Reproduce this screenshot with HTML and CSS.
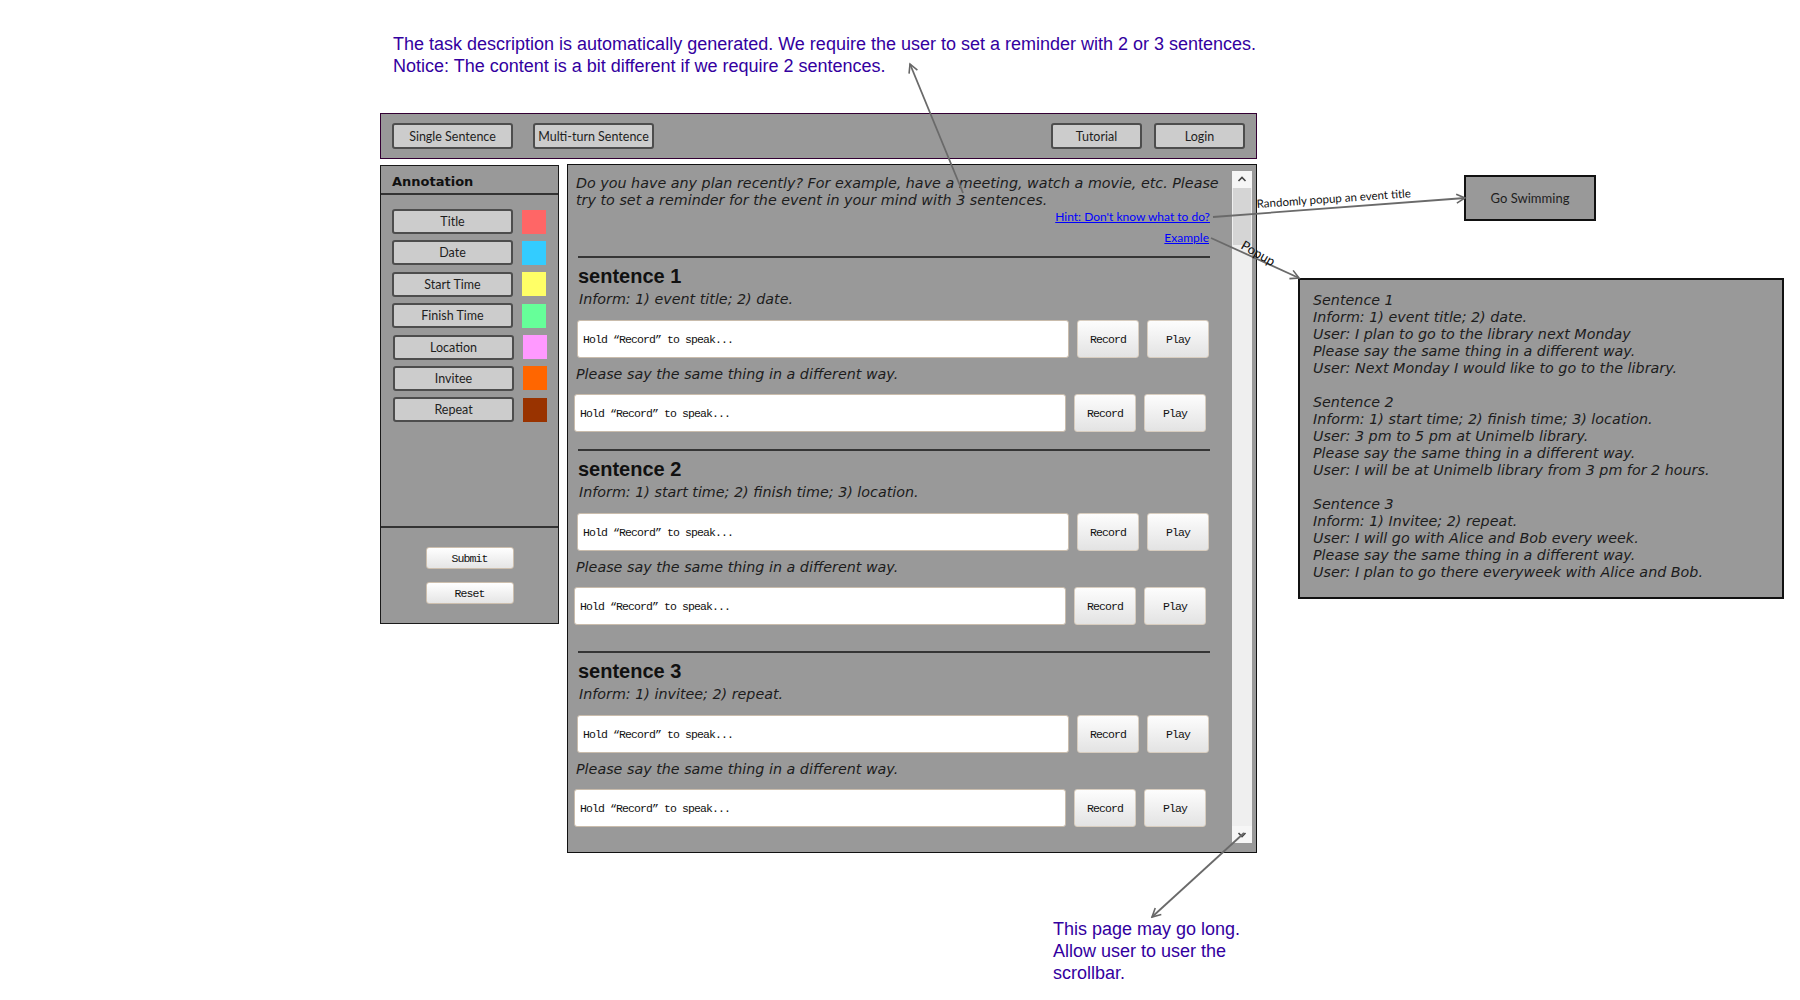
FILE: index.html
```html
<!DOCTYPE html>
<html lang="en">
<head>
<meta charset="utf-8">
<title>Reminder annotation mockup</title>
<link rel="stylesheet" href="styles.css">
</head>
<body>
<div class="canvas">
  <p class="note note--top">The task description is automatically generated. We require the user to set a reminder with 2 or 3 sentences.<br>Notice: The content is a bit different if we require 2 sentences.</p>

  <div class="mock">
    <header class="topbar">
      <div class="topbar-group">
        <button class="sketch-btn">Single Sentence</button>
        <button class="sketch-btn">Multi-turn Sentence</button>
      </div>
      <div class="topbar-group topbar-group--right">
        <button class="sketch-btn sketch-btn--small">Tutorial</button>
        <button class="sketch-btn sketch-btn--small">Login</button>
      </div>
    </header>

    <div class="workspace">
      <aside class="side">
        <div class="side-head">Annotation</div>
        <div class="side-body">
          <div class="tag-row"><button class="sketch-btn tag-btn">Title</button><span class="swatch swatch--title"></span></div>
          <div class="tag-row"><button class="sketch-btn tag-btn">Date</button><span class="swatch swatch--date"></span></div>
          <div class="tag-row"><button class="sketch-btn tag-btn">Start Time</button><span class="swatch swatch--start"></span></div>
          <div class="tag-row"><button class="sketch-btn tag-btn">Finish Time</button><span class="swatch swatch--finish"></span></div>
          <div class="tag-row tag-row--shift"><button class="sketch-btn tag-btn">Location</button><span class="swatch swatch--location"></span></div>
          <div class="tag-row tag-row--shift"><button class="sketch-btn tag-btn">Invitee</button><span class="swatch swatch--invitee"></span></div>
          <div class="tag-row tag-row--shift"><button class="sketch-btn tag-btn">Repeat</button><span class="swatch swatch--repeat"></span></div>
        </div>
        <div class="side-foot">
          <button class="plain-btn">Submit</button>
          <button class="plain-btn">Reset</button>
        </div>
      </aside>

      <main class="main">
        <div class="content">
          <p class="desc">Do you have any plan recently? For example, have a meeting, watch a movie, etc. Please<br>try to set a reminder for the event in your mind with 3 sentences.</p>
          <div class="links">
            <a class="link" href="#">Hint: Don't know what to do?</a>
            <a class="link link--example" href="#">Example</a>
          </div>

          <section class="sentence">
            <hr class="rule">
            <h2 class="sentence-title">sentence 1</h2>
            <p class="inform">Inform: 1) event title; 2) date.</p>
            <div class="record-row">
              <div class="speech">Hold “Record” to speak...</div>
              <button class="rec-btn">Record</button>
              <button class="rec-btn">Play</button>
            </div>
            <p class="please">Please say the same thing in a different way.</p>
            <div class="record-row record-row--alt">
              <div class="speech">Hold “Record” to speak...</div>
              <button class="rec-btn">Record</button>
              <button class="rec-btn">Play</button>
            </div>
          </section>

          <section class="sentence sentence--wide">
            <hr class="rule">
            <h2 class="sentence-title">sentence 2</h2>
            <p class="inform">Inform: 1) start time; 2) finish time; 3) location.</p>
            <div class="record-row">
              <div class="speech">Hold “Record” to speak...</div>
              <button class="rec-btn">Record</button>
              <button class="rec-btn">Play</button>
            </div>
            <p class="please">Please say the same thing in a different way.</p>
            <div class="record-row record-row--alt">
              <div class="speech">Hold “Record” to speak...</div>
              <button class="rec-btn">Record</button>
              <button class="rec-btn">Play</button>
            </div>
          </section>

          <section class="sentence">
            <hr class="rule">
            <h2 class="sentence-title">sentence 3</h2>
            <p class="inform">Inform: 1) invitee; 2) repeat.</p>
            <div class="record-row">
              <div class="speech">Hold “Record” to speak...</div>
              <button class="rec-btn">Record</button>
              <button class="rec-btn">Play</button>
            </div>
            <p class="please">Please say the same thing in a different way.</p>
            <div class="record-row record-row--alt">
              <div class="speech">Hold “Record” to speak...</div>
              <button class="rec-btn">Record</button>
              <button class="rec-btn">Play</button>
            </div>
          </section>
        </div>

        <div class="scrollbar">
          <div class="scroll-arrow">
            <svg width="20" height="17" viewBox="0 0 20 17"><polyline points="6.5,10 10,6.5 13.5,10" fill="none" stroke="#444" stroke-width="1.6"/></svg>
          </div>
          <div class="scroll-thumb"></div>
          <div class="scroll-track"></div>
          <div class="scroll-arrow">
            <svg width="20" height="17" viewBox="0 0 20 17"><polyline points="6.5,7 10,10.5 13.5,7" fill="none" stroke="#444" stroke-width="1.6"/></svg>
          </div>
        </div>
      </main>
    </div>
  </div>

  <p class="note note--bottom">This page may go long.<br>Allow user to user the<br>scrollbar.</p>

  <div class="event-box">Go Swimming</div>

  <div class="popup">
    <p class="popup-block">Sentence 1<br>Inform: 1) event title; 2) date.<br>User: I plan to go to the library next Monday<br>Please say the same thing in a different way.<br>User: Next Monday I would like to go to the library.</p>
    <p class="popup-block">Sentence 2<br>Inform: 1) start time; 2) finish time; 3) location.<br>User: 3 pm to 5 pm at Unimelb library.<br>Please say the same thing in a different way.<br>User: I will be at Unimelb library from 3 pm for 2 hours.</p>
    <p class="popup-block">Sentence 3<br>Inform: 1) Invitee; 2) repeat.<br>User: I will go with Alice and Bob every week.<br>Please say the same thing in a different way.<br>User: I plan to go there everyweek with Alice and Bob.</p>
  </div>

  <svg class="arrows" width="1800" height="1000" viewBox="0 0 1800 1000">
    <defs>
      <marker id="head" markerWidth="12" markerHeight="12" refX="10" refY="6" orient="auto" markerUnits="userSpaceOnUse">
        <path d="M1.5,1.5 L10,6 L1.5,10.5" fill="none" stroke="#666" stroke-width="1.6"/>
      </marker>
    </defs>
    <g class="arrow-lines">
      <line x1="963" y1="193" x2="910" y2="64" marker-end="url(#head)"/>
      <line x1="1213" y1="217" x2="1465" y2="198" marker-end="url(#head)"/>
      <line x1="1211" y1="238" x2="1299" y2="278" marker-end="url(#head)"/>
      <line x1="1244" y1="833" x2="1152" y2="917" marker-end="url(#head)"/>
    </g>
    <text class="arrow-label" x="1257" y="208" transform="rotate(-4 1257 208)">Randomly popup an event title</text>
    <text class="arrow-label arrow-label--big" x="1240" y="248" transform="rotate(30 1240 248)">Popup</text>
  </svg>
</div>
</body>
</html>
```

FILE: styles.css
```css
html, body {
  margin: 0;
  padding: 0;
  background: #ffffff;
}

.canvas {
  position: relative;
  width: 1800px;
  height: 1000px;
  overflow: hidden;
  font-family: "Liberation Sans", Arial, sans-serif;
}

/* annotation notes */
.note {
  margin: 0;
  font-family: "Liberation Sans", Arial, sans-serif;
  font-size: 18px;
  line-height: 22px;
  color: #3300a0;
}
.note--top {
  padding: 33px 0 0 393px;
}
.note--bottom {
  margin: 65px 0 0 1053px;
}

/* mock frame */
.mock {
  margin: 36px 0 0 380px;
  width: 877px;
}

.topbar {
  box-sizing: border-box;
  height: 46px;
  border: 1px solid #330033;
  background: #999999;
  display: flex;
  justify-content: space-between;
  padding: 9px 11px 0 11px;
}
.topbar-group {
  display: flex;
  gap: 20px;
}
.topbar-group--right {
  gap: 12px;
}

.sketch-btn {
  box-sizing: border-box;
  width: 121px;
  height: 26px;
  padding: 0;
  background: #cccccc;
  border: 2px solid #4d4d4d;
  border-radius: 3px;
  font-family: Lato, "Open Sans", sans-serif;
  font-size: 12.5px;
  color: #1e1e1e;
}
.sketch-btn--small {
  width: 91px;
}

.workspace {
  display: flex;
  align-items: flex-start;
  gap: 8px;
  margin-top: 5px;
}

/* left annotation panel */
.side {
  box-sizing: border-box;
  width: 179px;
  height: 459px;
  margin-top: 1px;
  border: 1px solid #1a1a1a;
  background: #999999;
  display: flex;
  flex-direction: column;
}
.side-head {
  height: 23px;
  padding: 4px 0 0 11px;
  border-bottom: 2px solid #333333;
  font-family: "DejaVu Sans", Verdana, sans-serif;
  font-weight: bold;
  font-size: 13px;
  line-height: 23px;
  color: #111111;
}
.side-body {
  flex: 1;
  display: flex;
  flex-direction: column;
  gap: 6.4px;
  padding: 14px 0 0 11px;
}
.tag-row {
  display: flex;
  align-items: center;
  gap: 9px;
}
.tag-row--shift {
  margin-left: 1px;
}
.tag-btn {
  height: 25px;
}
.swatch {
  width: 24px;
  height: 24px;
}
.swatch--title { background: #ff6666; }
.swatch--date { background: #33ccff; }
.swatch--start { background: #ffff66; }
.swatch--finish { background: #66ff99; }
.swatch--location { background: #ff99ff; }
.swatch--invitee { background: #ff6600; }
.swatch--repeat { background: #993300; }

.side-foot {
  border-top: 2px solid #333333;
  padding: 19px 0;
  display: flex;
  flex-direction: column;
  align-items: center;
  gap: 13px;
}
.plain-btn {
  box-sizing: border-box;
  width: 88px;
  height: 22px;
  padding: 0;
  background: linear-gradient(#ffffff, #e5e5e5);
  border: 1px solid #cdbfae;
  border-radius: 3px;
  font-family: "Liberation Mono", monospace;
  font-size: 11.5px;
  letter-spacing: -0.9px;
  color: #111111;
}

/* main task panel */
.main {
  box-sizing: border-box;
  width: 690px;
  height: 689px;
  border: 1px solid #111111;
  background: #999999;
  display: flex;
  gap: 22px;
  padding: 6px 4px 9px 8px;
}
.content {
  flex: 0 0 634px;
  min-width: 0;
  padding-top: 4px;
}
.desc,
.inform,
.please,
.popup-block {
  font-family: "DejaVu Sans", Verdana, sans-serif;
  font-style: italic;
  font-size: 14.3px;
  line-height: 17px;
  color: #1c1c1c;
}
.desc {
  margin: 0;
  white-space: nowrap;
}
.links {
  display: flex;
  flex-direction: column;
  align-items: flex-end;
}
.link {
  font-family: Lato, "Open Sans", sans-serif;
  font-size: 12px;
  line-height: 16px;
  color: #0000ff;
  text-decoration: underline;
}
.link--example {
  margin-top: 5px;
  margin-right: 1px;
}

.sentence {
  padding-bottom: 17px;
}
.sentence:first-of-type {
  margin-top: 10px;
}
.sentence--wide {
  padding-bottom: 26px;
}
.rule {
  height: 2px;
  margin: 0 0 0 2px;
  border: none;
  background: #353535;
}
.sentence-title {
  margin: 7px 0 0 2px;
  font-family: "Liberation Sans", Arial, sans-serif;
  font-size: 20px;
  line-height: 22px;
  font-weight: bold;
  color: #111111;
}
.inform {
  margin: 4px 0 0 3px;
}
.please {
  margin: 8px 0 0 0;
}

.record-row {
  display: flex;
  gap: 8px;
  height: 38px;
  margin: 12px 0 0 1px;
}
.record-row--alt {
  margin: 11px 0 0 -2px;
}
.speech {
  box-sizing: border-box;
  flex: 0 0 492px;
  display: flex;
  align-items: center;
  padding-left: 5px;
  background: #ffffff;
  border: 1px solid #c9bcac;
  border-radius: 3px;
  font-family: "Liberation Mono", monospace;
  font-size: 11.5px;
  letter-spacing: -0.9px;
  color: #111111;
}
.rec-btn {
  box-sizing: border-box;
  flex: 0 0 62px;
  padding: 0;
  background: linear-gradient(#fdfdfd, #e3e3e3);
  border: 1px solid #d8cdbf;
  border-radius: 3px;
  font-family: "Liberation Mono", monospace;
  font-size: 11.5px;
  letter-spacing: -0.9px;
  color: #111111;
}

.scrollbar {
  width: 20px;
  background: #efefef;
  display: flex;
  flex-direction: column;
}
.scroll-arrow {
  height: 17px;
  background: #f6f6f6;
}
.scroll-arrow svg {
  display: block;
}
.scroll-thumb {
  height: 57px;
  margin: 0 1px;
  background: #d5d5d5;
}
.scroll-track {
  flex: 1;
}

/* diagram nodes */
.event-box {
  position: absolute;
  left: 1464px;
  top: 175px;
  box-sizing: border-box;
  width: 132px;
  height: 46px;
  border: 2px solid #111111;
  background: #999999;
  display: flex;
  align-items: center;
  justify-content: center;
  font-family: Lato, "Open Sans", sans-serif;
  font-size: 13px;
  color: #1e1e1e;
}
.popup {
  position: absolute;
  left: 1298px;
  top: 278px;
  box-sizing: border-box;
  width: 486px;
  height: 321px;
  border: 2px solid #111111;
  background: #999999;
  padding: 12px 13px;
}
.popup-block {
  margin: 0 0 17px 0;
}

.arrows {
  position: absolute;
  left: 0;
  top: 0;
  pointer-events: none;
}
.arrow-lines line {
  stroke: #6a6a6a;
  stroke-width: 1.8;
}
.arrow-label {
  font-family: Lato, "Open Sans", sans-serif;
  font-size: 11.5px;
  fill: #111111;
}
.arrow-label--big {
  font-size: 13px;
}
```
